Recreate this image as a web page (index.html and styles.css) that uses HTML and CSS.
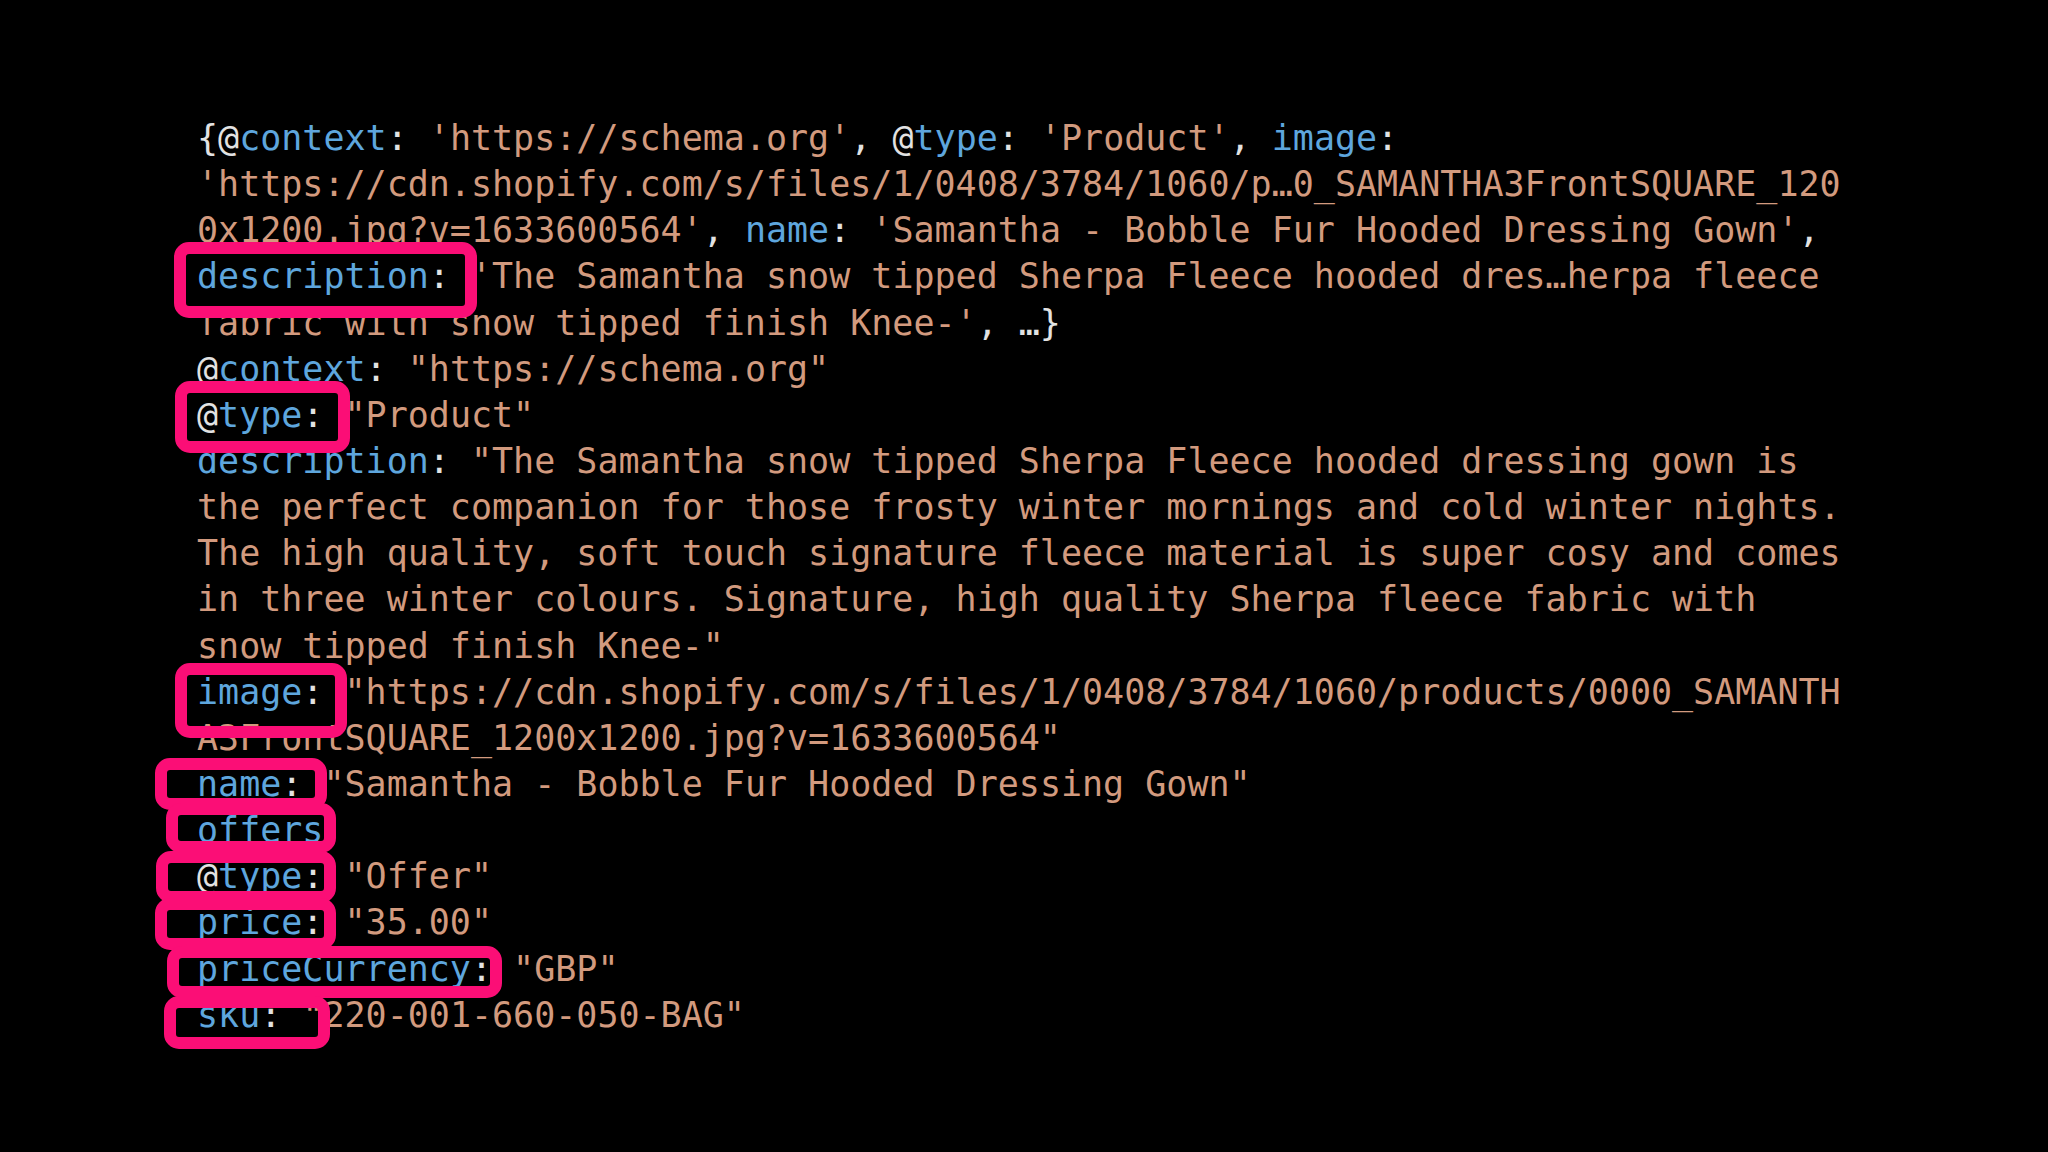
FILE: index.html
```html
<!DOCTYPE html>
<html>
<head>
<meta charset="utf-8">
<link rel="stylesheet" href="styles.css">
</head>
<body>
<div class="stage">
  <div class="code">
    <div class="line"><span class="p">{@</span><span class="k">context</span><span class="p">: </span><span class="s">'https://schema.org'</span><span class="p">, @</span><span class="k">type</span><span class="p">: </span><span class="s">'Product'</span><span class="p">, </span><span class="k">image</span><span class="p">:</span></div>
    <div class="line"><span class="s">'https://cdn.shopify.com/s/files/1/0408/3784/1060/p…0_SAMANTHA3FrontSQUARE_120</span></div>
    <div class="line"><span class="s">0x1200.jpg?v=1633600564'</span><span class="p">, </span><span class="k">name</span><span class="p">: </span><span class="s">'Samantha - Bobble Fur Hooded Dressing Gown'</span><span class="p">,</span></div>
    <div class="line"><span class="k">description</span><span class="p">: </span><span class="s">'The Samantha snow tipped Sherpa Fleece hooded dres…herpa fleece</span></div>
    <div class="line"><span class="s">fabric with snow tipped finish Knee-'</span><span class="p">, …}</span></div>
    <div class="line"><span class="p">@</span><span class="k">context</span><span class="p">: </span><span class="s">"https://schema.org"</span></div>
    <div class="line"><span class="p">@</span><span class="k">type</span><span class="p">: </span><span class="s">"Product"</span></div>
    <div class="line"><span class="k">description</span><span class="p">: </span><span class="s">"The Samantha snow tipped Sherpa Fleece hooded dressing gown is</span></div>
    <div class="line"><span class="s">the perfect companion for those frosty winter mornings and cold winter nights.</span></div>
    <div class="line"><span class="s">The high quality, soft touch signature fleece material is super cosy and comes</span></div>
    <div class="line"><span class="s">in three winter colours. Signature, high quality Sherpa fleece fabric with</span></div>
    <div class="line"><span class="s">snow tipped finish Knee-"</span></div>
    <div class="line"><span class="k">image</span><span class="p">: </span><span class="s">"https://cdn.shopify.com/s/files/1/0408/3784/1060/products/0000_SAMANTH</span></div>
    <div class="line"><span class="s">A3FrontSQUARE_1200x1200.jpg?v=1633600564"</span></div>
    <div class="line"><span class="k">name</span><span class="p">: </span><span class="s">"Samantha - Bobble Fur Hooded Dressing Gown"</span></div>
    <div class="line"><span class="k">offers</span></div>
    <div class="line"><span class="p">@</span><span class="k">type</span><span class="p">: </span><span class="s">"Offer"</span></div>
    <div class="line"><span class="k">price</span><span class="p">: </span><span class="s">"35.00"</span></div>
    <div class="line"><span class="k">priceCurrency</span><span class="p">: </span><span class="s">"GBP"</span></div>
    <div class="line"><span class="k">sku</span><span class="p">: </span><span class="s">"220-001-660-050-BAG"</span></div>
  </div>
  <div class="mark m1"></div>
  <div class="mark m2"></div>
  <div class="mark m3"></div>
  <div class="mark m4"></div>
  <div class="mark m5"></div>
  <div class="mark m6"></div>
  <div class="mark m7"></div>
  <div class="mark m8"></div>
  <div class="mark m9"></div>
</div>
</body>
</html>
```
FILE: styles.css
```css
html, body {
  margin: 0;
  padding: 0;
  background: #000;
}

.stage {
  position: relative;
  width: 2048px;
  height: 1152px;
  overflow: hidden;
  background: #000;
}

.code {
  padding: 115px 0 0 197px;
  font-family: "DejaVu Sans Mono", "Liberation Mono", monospace;
  font-size: 35px;
  line-height: 46.15px;
}

.line {
  height: 46.15px;
  white-space: pre;
}

.k { color: #5ea6dd; }
.p { color: #e2e2e2; }
.s { color: #d29a7e; }

.mark {
  position: absolute;
  box-sizing: border-box;
  border: 12px solid #fb0e76;
  border-radius: 15px;
}

.m1 { left: 174px; top: 242px; width: 303px; height: 76px; }
.m2 { left: 175px; top: 381px; width: 175px; height: 72px; }
.m3 { left: 175px; top: 663px; width: 172px; height: 75px; }
.m4 { left: 155px; top: 758px; width: 172px; height: 52px; }
.m5 { left: 166px; top: 803px; width: 170px; height: 50px; }
.m6 { left: 156px; top: 851px; width: 180px; height: 52px; }
.m7 { left: 155px; top: 898px; width: 181px; height: 52px; }
.m8 { left: 167px; top: 946px; width: 335px; height: 52px; }
.m9 { left: 164px; top: 996px; width: 166px; height: 53px; }
```
